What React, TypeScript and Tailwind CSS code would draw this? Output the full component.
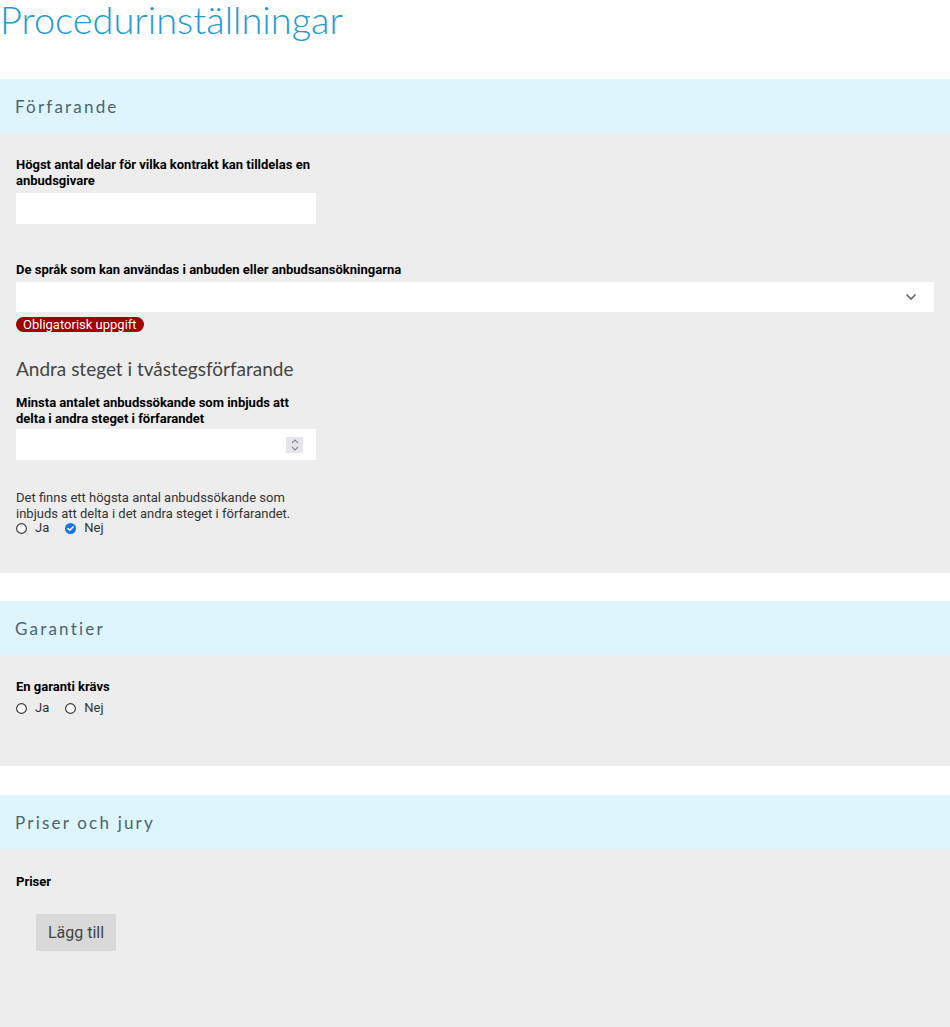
import React from 'react';

const heading = { fontFamily: '"Lato", "Open Sans", sans-serif' };
const body = { fontFamily: 'Roboto, "Liberation Sans", sans-serif' };

function SectionHeader({ title }: { title: string }) {
  return (
    <div className="h-[54px] bg-[#def5fe] flex items-center px-[15px] pt-[2px]">
      <h2 style={heading} className="text-[17px] tracking-[2.2px] text-[#4a6470]">{title}</h2>
    </div>
  );
}

function Label({ children }: { children: React.ReactNode }) {
  return <p className="text-[13px] leading-4 font-bold text-black w-[300px]">{children}</p>;
}

function Radio({ label, checked = false }: { label: string; checked?: boolean }) {
  return (
    <label className="flex items-center gap-[8px] text-[13px] leading-4 text-[#333]">
      {checked ? (
        <svg width="11" height="11" viewBox="0 0 11 11">
          <circle cx="5.5" cy="5.5" r="5.5" fill="#1a73e8" />
          <path d="M3 5.6 L4.8 7.3 L8 3.9" stroke="#fff" strokeWidth="1.5" fill="none" strokeLinecap="round" strokeLinejoin="round" />
        </svg>
      ) : (
        <svg width="11" height="11" viewBox="0 0 11 11">
          <circle cx="5.5" cy="5.5" r="4.9" fill="#fff" stroke="#333" strokeWidth="1.1" />
        </svg>
      )}
      <span>{label}</span>
    </label>
  );
}

export default function App() {
  return (
    <div style={body} className="w-[950px] min-h-[1027px] bg-white">
      <h1 style={heading} className="text-[38px] leading-[38px] font-light text-[#229bd1] mb-[41px]">
        Procedurinställningar
      </h1>

      {/* Förfarande */}
      <SectionHeader title="Förfarande" />
      <div className="bg-[#ededed] px-4 pt-[24px] h-[440px]">
        <Label>Högst antal delar för vilka kontrakt kan tilldelas en anbudsgivare</Label>
        <div className="w-[300px] h-[31px] bg-white mt-[4px]" />

        <div className="mt-[38px]">
          <p className="text-[13px] leading-4 font-bold text-black">De språk som kan användas i anbuden eller anbudsansökningarna</p>
          <div className="h-[30px] bg-white mt-[4px] flex items-center justify-end pr-[17px]">
            <svg width="12" height="8" viewBox="0 0 12 8">
              <path d="M1.5 1.5 L6 6 L10.5 1.5" stroke="#666" strokeWidth="1.6" fill="none" />
            </svg>
          </div>
          <span className="inline-block mt-[2px] h-[15px] px-[7px] rounded-full bg-[#a00000] text-white text-[13px] leading-[15px]">
            Obligatorisk uppgift
          </span>
        </div>

        <h3 style={heading} className="text-[19px] leading-[26px] text-[#444] mt-[20px] mb-[13px]">
          Andra steget i tvåstegsförfarande
        </h3>
        <Label>Minsta antalet anbudssökande som inbjuds att delta i andra steget i förfarandet</Label>
        <div className="w-[300px] h-[31px] bg-white mt-[2px] flex items-center justify-end pr-[13px]">
          <div className="w-[17px] h-[16px] bg-[#e6e6ea] flex flex-col items-center justify-center gap-[2px]">
            <svg width="8" height="5" viewBox="0 0 8 5">
              <path d="M1 4 L4 1 L7 4" stroke="#888" strokeWidth="1.1" fill="none" />
            </svg>
            <svg width="8" height="5" viewBox="0 0 8 5">
              <path d="M1 1 L4 4 L7 1" stroke="#888" strokeWidth="1.1" fill="none" />
            </svg>
          </div>
        </div>

        <p className="text-[13px] leading-4 text-[#333] mt-[30px] w-[300px]">
          Det finns ett högsta antal anbudssökande som inbjuds att delta i det andra steget i förfarandet.
        </p>
        <div className="flex gap-[16px] -mt-[2px]">
          <Radio label="Ja" />
          <Radio label="Nej" checked />
        </div>
      </div>

      <div className="h-[28px]" />

      {/* Garantier */}
      <SectionHeader title="Garantier" />
      <div className="bg-[#ededed] px-4 pt-[24px] h-[111px]">
        <Label>En garanti krävs</Label>
        <div className="flex gap-[16px] mt-[5px]">
          <Radio label="Ja" />
          <Radio label="Nej" />
        </div>
      </div>

      <div className="h-[29px]" />

      {/* Priser och jury */}
      <SectionHeader title="Priser och jury" />
      <div className="bg-[#ededed] px-4 pt-[25px] h-[178px]">
        <Label>Priser</Label>
        <button className="ml-[20px] mt-[24px] w-[80px] h-[37px] bg-[#d9d9d9] rounded-[2px] text-[16px] text-[#444]">
          Lägg till
        </button>
      </div>
    </div>
  );
}
